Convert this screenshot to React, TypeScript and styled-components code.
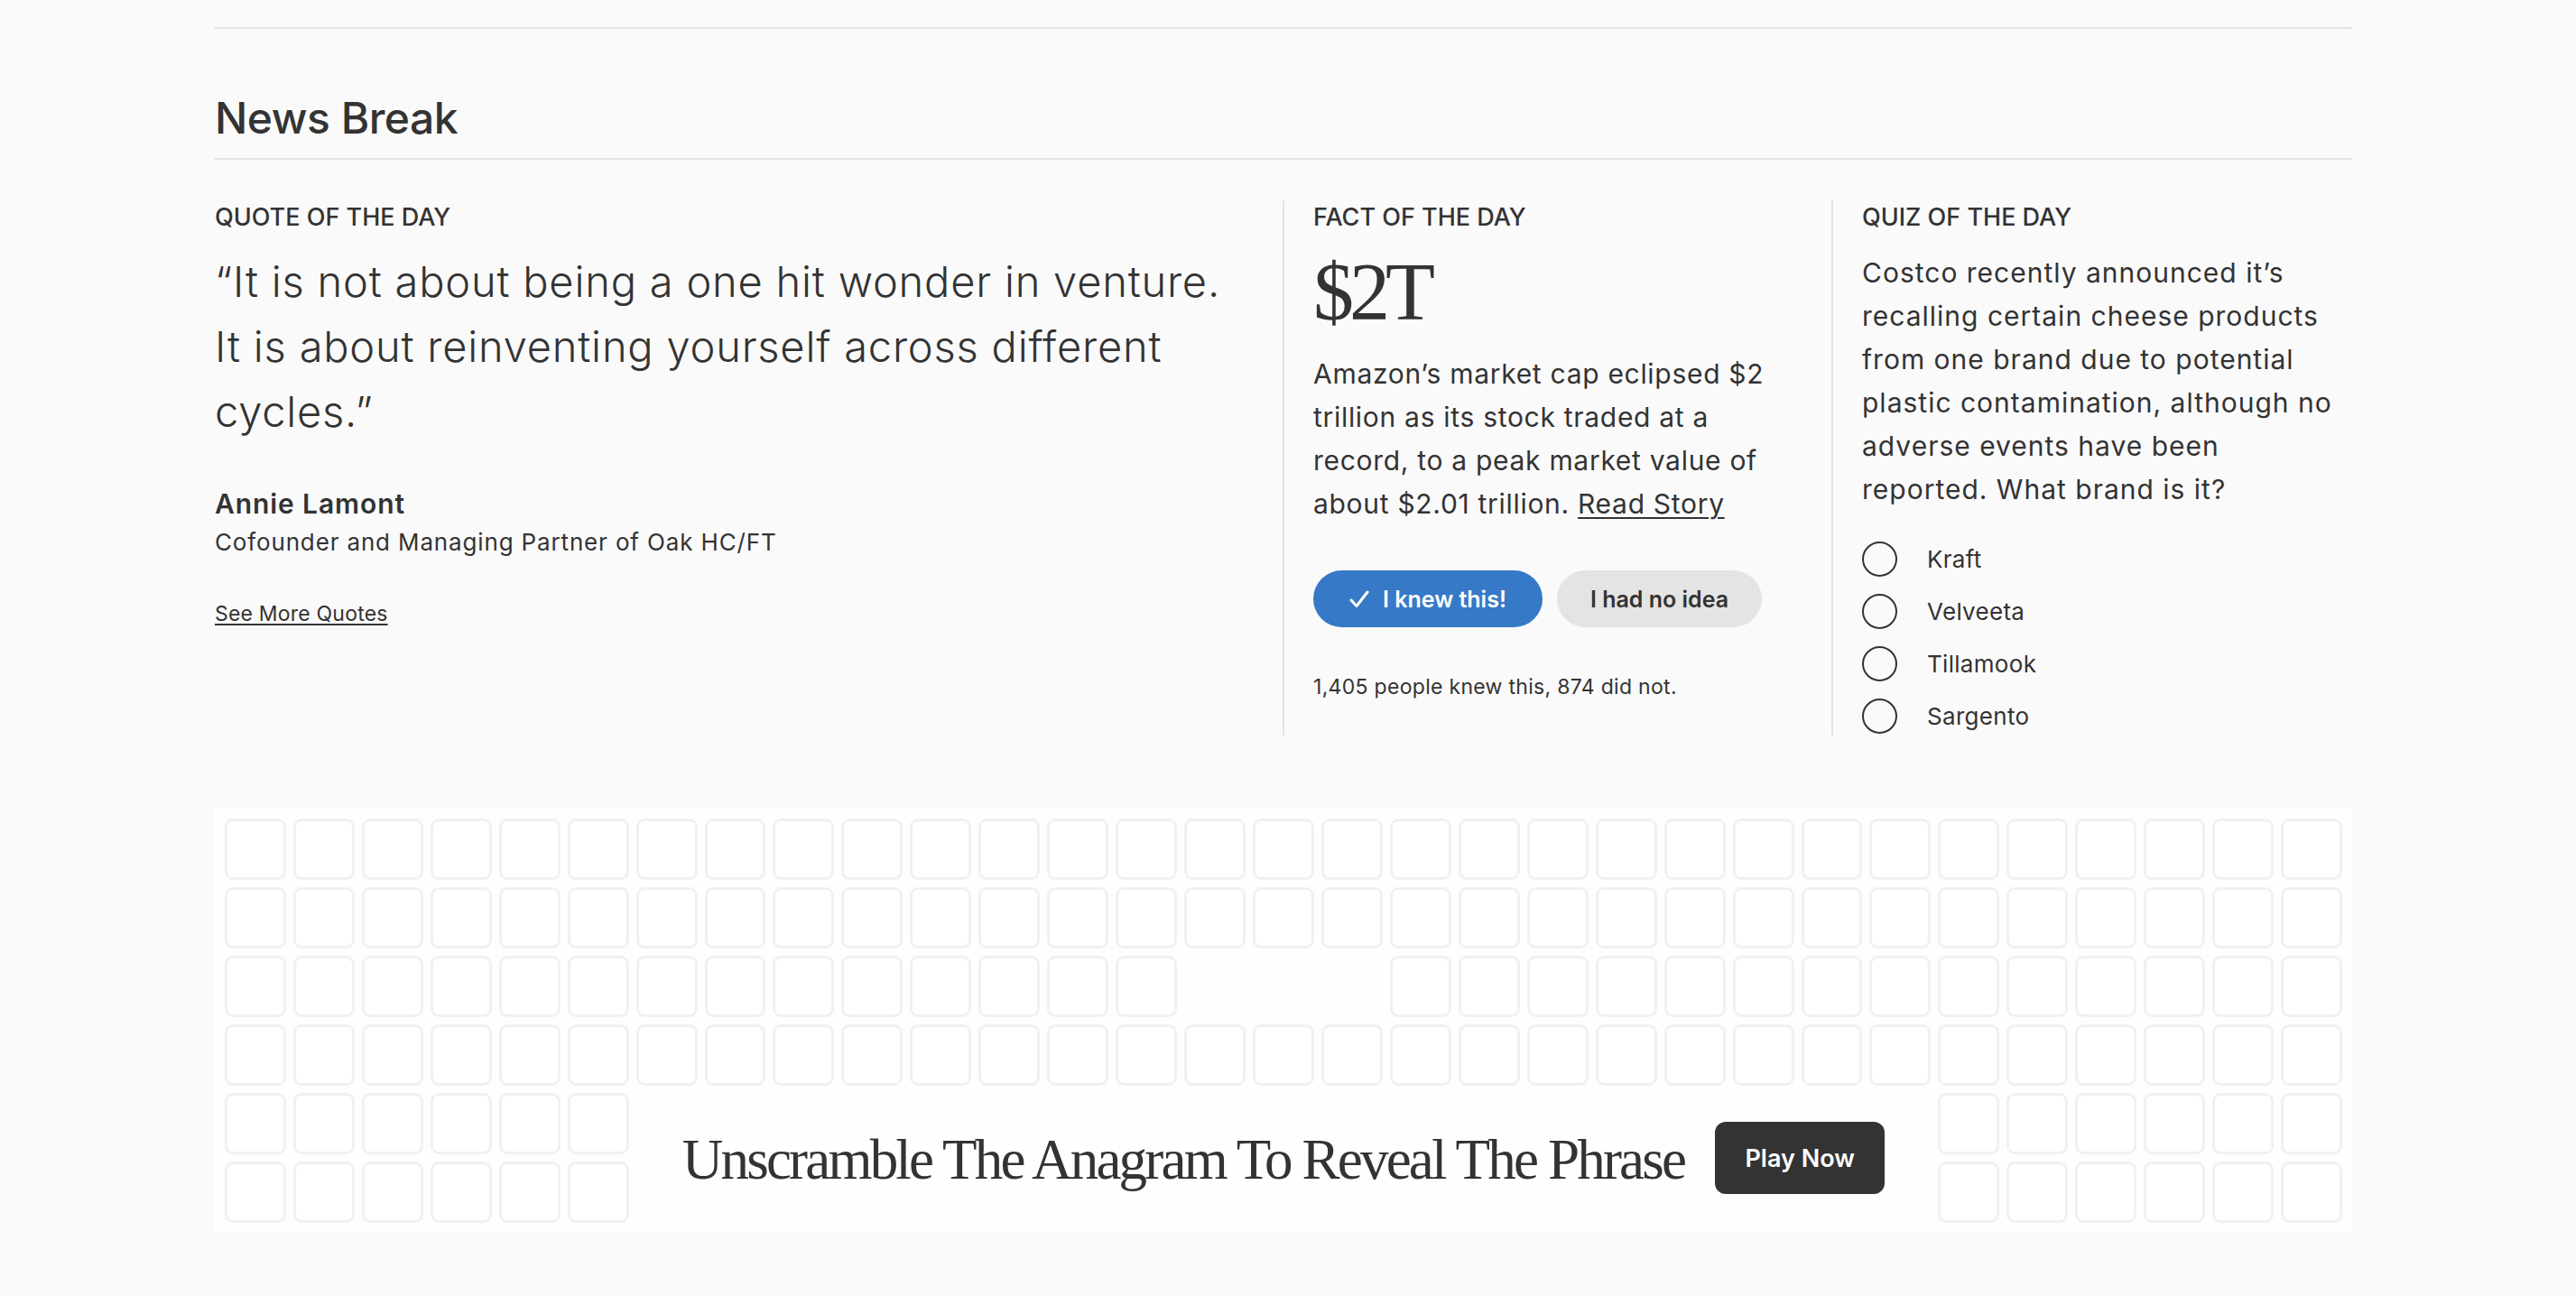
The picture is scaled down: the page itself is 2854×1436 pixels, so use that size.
import React from "react";
import styled, { createGlobalStyle } from "styled-components";

const GlobalStyle = createGlobalStyle`
  html, body {
    margin: 0;
    padding: 0;
    background: #fafafa;
  }
  body {
    font-family: Inter, "Liberation Sans", Arial, sans-serif;
    color: #333333;
  }
  * { box-sizing: border-box; }
`;

const Page = styled.main`
  padding: 30px 0 70px;
`;

const Container = styled.section`
  width: 2368px;
  margin-left: 238px;
  border-top: 2px solid #e3e3e3;
`;

const SectionTitle = styled.h2`
  margin: 70px 0 0;
  padding-bottom: 15px;
  border-bottom: 2px solid #e3e3e3;
  font-size: 48px;
  line-height: 58px;
  font-weight: 500;
  letter-spacing: -0.5px;
`;

const Columns = styled.div`
  display: grid;
  grid-template-columns: 1183px 608px 1fr;
  margin-top: 45px;
`;

const Column = styled.div<{ $divider?: boolean }>`
  padding-top: 4px;
  padding-bottom: 2px;
  ${(p) =>
    p.$divider
      ? `border-left: 2px solid #e3e3e3; padding-left: 32px;`
      : ``}
`;

const Label = styled.h3`
  margin: 0;
  font-size: 27px;
  line-height: 30px;
  font-weight: 500;
  text-transform: uppercase;
`;

const Quote = styled.blockquote`
  margin: 20px 0 0;
  font-size: 47px;
  line-height: 72px;
  font-weight: 300;
  letter-spacing: 0.8px;
`;

const Author = styled.div`
  margin-top: 48px;
  font-size: 30px;
  line-height: 36px;
  font-weight: 600;
  letter-spacing: 0.9px;
`;

const Role = styled.div`
  margin-top: 7px;
  font-size: 26px;
  line-height: 36px;
  font-weight: 400;
  letter-spacing: 0.85px;
`;

const SeeMore = styled.a`
  display: inline-block;
  margin-top: 46px;
  font-size: 23px;
  line-height: 30px;
  letter-spacing: 0.2px;
  color: #333333;
  text-decoration: underline;
  text-underline-offset: 3px;
`;

const BigFact = styled.div`
  margin-top: 23px;
  font-family: "Liberation Serif", "Times New Roman", serif;
  font-size: 90px;
  line-height: 90px;
  letter-spacing: -5px;
  color: #333333;
`;

const Body = styled.p<{ $gap: number; $track: number }>`
  margin: ${(p) => p.$gap}px 0 0;
  font-size: 30px;
  line-height: 48px;
  font-weight: 400;
  letter-spacing: ${(p) => p.$track}px;
`;

const StoryLink = styled.a`
  color: #333333;
  text-decoration: underline;
  text-underline-offset: 4px;
  text-decoration-thickness: 2px;
`;

const ButtonRow = styled.div`
  display: flex;
  gap: 16px;
  margin-top: 50px;
`;

const Pill = styled.button<{ $primary?: boolean }>`
  display: inline-flex;
  align-items: center;
  justify-content: center;
  gap: 15px;
  height: 63px;
  padding: 0 ${(p) => (p.$primary ? 40 : 37)}px;
  border: none;
  border-radius: 32px;
  background: ${(p) => (p.$primary ? "#3679c6" : "#e4e4e4")};
  color: ${(p) => (p.$primary ? "#ffffff" : "#333333")};
  font-family: Inter, "Liberation Sans", Arial, sans-serif;
  font-size: 25px;
  font-weight: 600;
  cursor: pointer;
`;

const Stats = styled.div`
  margin-top: 50px;
  font-size: 23px;
  line-height: 32px;
  letter-spacing: 0.3px;
`;

const Options = styled.ul`
  list-style: none;
  margin: 34px 0 0;
  padding: 0;
  display: flex;
  flex-direction: column;
  gap: 19px;
`;

const Option = styled.li`
  display: flex;
  align-items: center;
  gap: 33px;
  font-size: 26px;
  line-height: 39px;
  letter-spacing: 0.3px;
`;

const Radio = styled.span`
  width: 39px;
  height: 39px;
  border: 2px solid #333333;
  border-radius: 50%;
  flex: none;
`;

const Banner = styled.div`
  margin-top: 80px;
  background: #fefefe;
  padding: 12px 11px 11px;
  display: grid;
  grid-template-columns: repeat(31, 1fr);
  grid-template-rows: repeat(6, 68px);
  gap: 8px;
`;

const Tile = styled.div<{ $hidden?: boolean }>`
  border: 3px solid #f1f1f1;
  border-radius: 9px;
  background: #ffffff;
  visibility: ${(p) => (p.$hidden ? "hidden" : "visible")};
`;

const Cta = styled.div`
  grid-column: 7 / 26;
  grid-row: 5 / 7;
  display: flex;
  align-items: center;
  justify-content: center;
  gap: 34px;
`;

const Phrase = styled.div`
  font-family: "Liberation Serif", "Times New Roman", serif;
  font-size: 63px;
  line-height: 1;
  letter-spacing: -2.8px;
  color: #333333;
  white-space: nowrap;
  padding-top: 4px;
`;

const PlayButton = styled.button`
  width: 188px;
  height: 80px;
  border: none;
  border-radius: 12px;
  background: #333333;
  color: #ffffff;
  font-family: Inter, "Liberation Sans", Arial, sans-serif;
  font-size: 27px;
  font-weight: 600;
  cursor: pointer;
`;

const CheckIcon = () => (
  <svg width="22" height="20" viewBox="0 0 22 20" aria-hidden="true">
    <polyline
      points="2,11 8,17.5 20,2"
      fill="none"
      stroke="#ffffff"
      strokeWidth="3"
      strokeLinecap="round"
      strokeLinejoin="round"
    />
  </svg>
);

const tiles: { key: string; hidden: boolean }[] = [];
for (let r = 0; r < 6; r++) {
  for (let c = 0; c < 31; c++) {
    if (r >= 4 && c >= 6 && c <= 24) continue;
    tiles.push({ key: `${r}-${c}`, hidden: r === 2 && c >= 14 && c <= 16 });
  }
}

const options = ["Kraft", "Velveeta", "Tillamook", "Sargento"];

export default function App() {
  return (
    <>
      <GlobalStyle />
      <Page>
        <Container>
          <SectionTitle>News Break</SectionTitle>
          <Columns>
            <Column>
              <Label>Quote of the Day</Label>
              <Quote>
                “It is not about being a one hit wonder in venture.
                <br />
                It is about reinventing yourself across different
                <br />
                cycles.”
              </Quote>
              <Author>Annie Lamont</Author>
              <Role>Cofounder and Managing Partner of Oak HC/FT</Role>
              <SeeMore href="#">See More Quotes</SeeMore>
            </Column>
            <Column $divider>
              <Label>Fact of the Day</Label>
              <BigFact>$2T</BigFact>
              <Body $gap={21} $track={0.7}>
                Amazon’s market cap eclipsed $2
                <br />
                trillion as its stock traded at a
                <br />
                record, to a peak market value of
                <br />
                about $2.01 trillion. <StoryLink href="#">Read Story</StoryLink>
              </Body>
              <ButtonRow>
                <Pill $primary>
                  <CheckIcon />
                  I knew this!
                </Pill>
                <Pill>I had no idea</Pill>
              </ButtonRow>
              <Stats>1,405 people knew this, 874 did not.</Stats>
            </Column>
            <Column $divider>
              <Label>Quiz of the Day</Label>
              <Body $gap={22} $track={1}>
                Costco recently announced it’s
                <br />
                recalling certain cheese products
                <br />
                from one brand due to potential
                <br />
                plastic contamination, although no
                <br />
                adverse events have been
                <br />
                reported. What brand is it?
              </Body>
              <Options>
                {options.map((o) => (
                  <Option key={o}>
                    <Radio />
                    {o}
                  </Option>
                ))}
              </Options>
            </Column>
          </Columns>
          <Banner>
            <Cta>
              <Phrase>Unscramble The Anagram To Reveal The Phrase</Phrase>
              <PlayButton>Play Now</PlayButton>
            </Cta>
            {tiles.map((t) => (
              <Tile key={t.key} $hidden={t.hidden} />
            ))}
          </Banner>
        </Container>
      </Page>
    </>
  );
}
